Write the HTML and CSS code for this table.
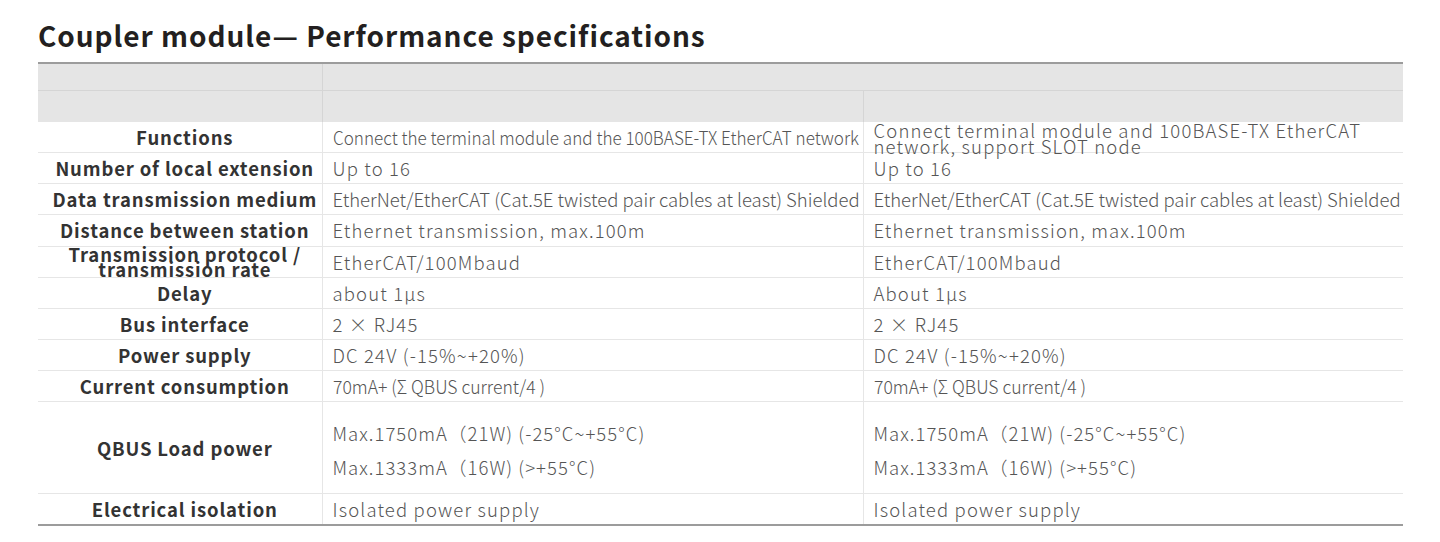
FILE: index.html
```html
<!DOCTYPE html>
<html lang="en">
<head>
<meta charset="utf-8">
<title>Coupler module — Performance specifications</title>
<link rel="stylesheet" href="styles.css">
</head>
<body>
<div class="page">
  <h1 class="title">Coupler module— Performance specifications</h1>
  <table class="spec">
    <colgroup>
      <col class="c-label">
      <col class="c-a">
      <col class="c-b">
    </colgroup>
    <thead>
      <tr class="h1">
        <th></th>
        <th colspan="2"></th>
      </tr>
      <tr class="h2">
        <th></th>
        <th></th>
        <th></th>
      </tr>
    </thead>
    <tbody>
      <tr>
        <td class="lbl">Functions</td>
        <td><span class="narrow">Connect the terminal module and the 100BASE-TX EtherCAT network</span></td>
        <td><div class="box2 val2">Connect terminal module and 100BASE-TX EtherCAT<br>network, support SLOT node</div></td>
      </tr>
      <tr>
        <td class="lbl">Number of local extension</td>
        <td>Up to 16</td>
        <td>Up to 16</td>
      </tr>
      <tr>
        <td class="lbl">Data transmission medium</td>
        <td class="tight">EtherNet/EtherCAT (Cat.5E twisted pair cables at least) Shielded</td>
        <td class="tight">EtherNet/EtherCAT (Cat.5E twisted pair cables at least) Shielded</td>
      </tr>
      <tr>
        <td class="lbl">Distance between station</td>
        <td>Ethernet transmission, max.100m</td>
        <td>Ethernet transmission, max.100m</td>
      </tr>
      <tr>
        <td class="lbl"><div class="box2 lbl2">Transmission protocol /<br>transmission rate</div></td>
        <td>EtherCAT/100Mbaud</td>
        <td>EtherCAT/100Mbaud</td>
      </tr>
      <tr>
        <td class="lbl">Delay</td>
        <td>about 1μs</td>
        <td>About 1μs</td>
      </tr>
      <tr>
        <td class="lbl">Bus interface</td>
        <td>2 × RJ45</td>
        <td>2 × RJ45</td>
      </tr>
      <tr>
        <td class="lbl">Power supply</td>
        <td>DC 24V (-15%~+20%)</td>
        <td>DC 24V (-15%~+20%)</td>
      </tr>
      <tr>
        <td class="lbl">Current consumption</td>
        <td><span class="cur">70mA+ (Σ QBUS current/4 )</span></td>
        <td><span class="cur">70mA+ (Σ QBUS current/4 )</span></td>
      </tr>
      <tr class="tall">
        <td class="lbl">QBUS Load power</td>
        <td><div class="lines"><span>Max.1750mA（21W) (-25°C~+55°C)</span><span>Max.1333mA（16W) (&gt;+55°C)</span></div></td>
        <td><div class="lines"><span>Max.1750mA（21W) (-25°C~+55°C)</span><span>Max.1333mA（16W) (&gt;+55°C)</span></div></td>
      </tr>
      <tr>
        <td class="lbl">Electrical isolation</td>
        <td>Isolated power supply</td>
        <td>Isolated power supply</td>
      </tr>
    </tbody>
  </table>
</div>
</body>
</html>
```

FILE: styles.css
```css
html, body {
  margin: 0;
  padding: 0;
  background: #ffffff;
}

.page {
  padding: 18px 37px 0 38px;
  font-family: "Noto Sans CJK SC", "Noto Sans", sans-serif;
}

.title {
  margin: 0 0 10px 0;
  font-size: 28px;
  line-height: 34px;
  font-weight: 700;
  color: #231f20;
  letter-spacing: 0.95px;
}

.spec {
  width: 1365px;
  border-collapse: collapse;
  table-layout: fixed;
  border-top: 2px solid #9c9c9c;
  border-bottom: 2px solid #9c9c9c;
}

.c-label { width: 284px; }
.c-a { width: 541px; }
.c-b { width: 540px; }

.spec thead th {
  background: #e5e5e5;
  padding: 0;
  border-left: 1px solid #d5d5d5;
}

.spec thead th:first-child {
  border-left: none;
}

.spec .h1 th {
  height: 26px;
  border-bottom: 1px solid #d5d5d5;
}

.spec .h2 th {
  height: 31px;
}

.spec td {
  height: 30.15px;
  padding: 0 0 0 10px;
  border-top: 1px solid #e6e6e6;
  border-left: 1px solid #e6e6e6;
  font-size: 18.5px;
  font-weight: 300;
  color: #555555;
  letter-spacing: 1.15px;
  white-space: nowrap;
  overflow: visible;
  vertical-align: middle;
  line-height: 20px;
}

.spec tbody tr:first-child td {
  border-top: none;
}

.spec td.lbl {
  border-left: none;
  padding: 0 0 0 10px;
  text-align: center;
  font-weight: 700;
  color: #333333;
  letter-spacing: 0.85px;
  font-size: 18.5px;
}

.box2 {
  height: 30px;
  display: flex;
  flex-direction: column;
  justify-content: center;
  overflow: visible;
}

.lbl2 {
  line-height: 15px;
  align-items: center;
}

.val2 {
  line-height: 16px;
  padding-top: 1px;
  box-sizing: border-box;
}

.spec td.tight {
  letter-spacing: 0;
}

.cur {
  display: inline-block;
  letter-spacing: 0;
  transform: scaleX(0.95);
  transform-origin: left center;
}

.narrow {
  display: inline-block;
  letter-spacing: 0;
  transform: scaleX(0.924);
  transform-origin: left center;
}

.spec tr.tall td {
  height: 91px;
}

.lines {
  display: flex;
  flex-direction: column;
  gap: 14px;
  padding-top: 4px;
  letter-spacing: 1.05px;
}
```
